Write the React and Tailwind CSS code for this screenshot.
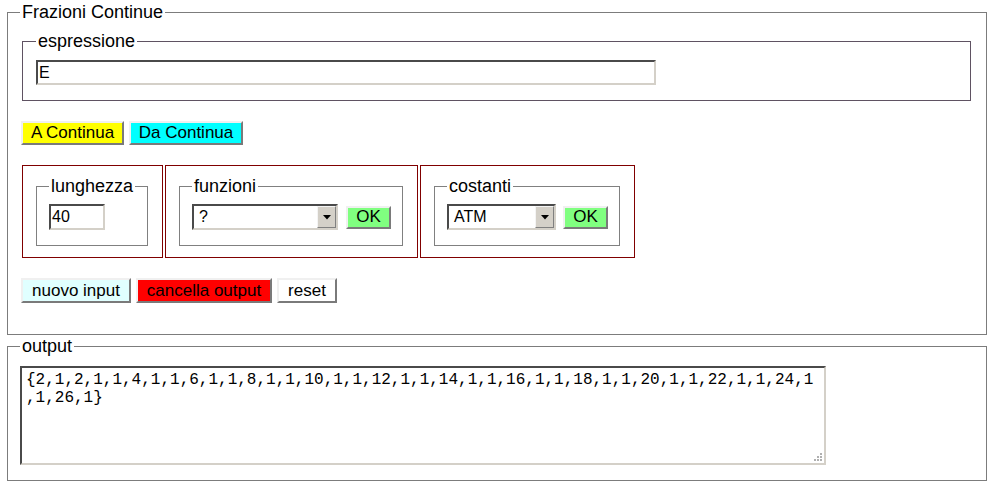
import React from "react";

const outset =
  "border-2 border-t-[#f0f0f0] border-l-[#f0f0f0] border-b-[#7a7a7a] border-r-[#7a7a7a]";
const inset =
  "border-2 border-t-[#4a4a4a] border-l-[#4a4a4a] border-b-[#d4d0c8] border-r-[#d4d0c8]";

function Btn({ className, children }) {
  return (
    <button
      className={`${outset} ${className} flex items-center justify-center text-[17px] leading-[18px] text-black`}
    >
      {children}
    </button>
  );
}

function FakeSelect({ width, value }) {
  return (
    <div
      className={`${inset} ${width} h-[26px] bg-white flex items-center justify-between`}
    >
      <span className="pl-[5px] text-[16px] leading-[18px]">{value}</span>
      <span className="w-[19px] h-[22px] bg-[#d4d0c8] border border-t-[#f4f4f4] border-l-[#f4f4f4] border-b-[#808080] border-r-[#808080] flex items-center justify-center">
        <svg width="8" height="5" viewBox="0 0 8 5">
          <path d="M0 0 H8 L4 4.5 Z" fill="#000" />
        </svg>
      </span>
    </div>
  );
}

export default function App() {
  return (
    <div className="w-[992px] h-[492px] bg-white pt-[3px] pl-[7px] font-['Liberation_Sans',Arial,sans-serif] text-black">
      <fieldset className="w-[980px] border border-[#7c7c7c] pl-[12px] pt-[11px] pb-[31px]">
        <legend className="px-[2px] text-[18px] leading-[18px]">Frazioni Continue</legend>

        <fieldset className="ml-[2px] w-[949px] border border-[#5f5262] pl-[13px] pt-[10px] pb-[15px]">
          <legend className="px-[2px] text-[18px] leading-[18px]">espressione</legend>
          <div className={`${inset} w-[620px] h-[25px] bg-white flex items-center pl-[1px] text-[16px] leading-[18px]`}>
            E
          </div>
        </fieldset>

        <div className="mt-[20px] ml-[1px] flex gap-[5px]">
          <Btn className="bg-[#ffff00] w-[103px] h-[24px]">A Continua</Btn>
          <Btn className="bg-[#00ffff] w-[114px] h-[24px]">Da Continua</Btn>
        </div>

        <div className="mt-[20px] ml-[2px] flex gap-[2px]">
          <div className="w-[141px] border border-[#800000] pl-[13px] pt-[11px] pb-[11px]">
            <fieldset className="w-[112px] border border-[#808080] pl-[12px] pt-[9px] pb-[15px]">
              <legend className="px-[2px] text-[18px] leading-[18px]">lunghezza</legend>
              <div className={`${inset} w-[56px] h-[26px] bg-white flex items-center pl-[1px] text-[16px] leading-[18px]`}>
                40
              </div>
            </fieldset>
          </div>

          <div className="w-[253px] border border-[#800000] pl-[13px] pt-[11px] pb-[11px]">
            <fieldset className="w-[224px] border border-[#808080] pl-[12px] pt-[9px] pb-[15px]">
              <legend className="px-[2px] text-[18px] leading-[18px]">funzioni</legend>
              <div className="flex items-center gap-[8px]">
                <FakeSelect width="w-[146px]" value="?" />
                <Btn className="bg-[#80ff80] h-[23px] w-[45px]">OK</Btn>
              </div>
            </fieldset>
          </div>

          <div className="w-[215px] border border-[#800000] pl-[13px] pt-[11px] pb-[11px]">
            <fieldset className="w-[186px] border border-[#808080] pl-[12px] pt-[9px] pb-[15px]">
              <legend className="px-[2px] text-[18px] leading-[18px]">costanti</legend>
              <div className="flex items-center gap-[7px]">
                <FakeSelect width="w-[109px]" value="ATM" />
                <Btn className="bg-[#80ff80] h-[23px] w-[45px]">OK</Btn>
              </div>
            </fieldset>
          </div>
        </div>

        <div className="mt-[20px] ml-[1px] flex gap-[5px]">
          <Btn className="bg-[#e0ffff] w-[110px] h-[25px]">nuovo input</Btn>
          <Btn className="bg-[#ff0000] w-[136px] h-[25px]">cancella output</Btn>
          <Btn className="bg-white w-[60px] h-[25px]">reset</Btn>
        </div>
      </fieldset>

      <fieldset className="mt-[2px] w-[980px] border border-[#7c7c7c] pl-[12px] pt-[11px] pb-[15px]">
        <legend className="px-[2px] text-[18px] leading-[18px]">output</legend>
        <div
          className={`${inset} border-b-[#c8c8c8] border-r-[#c8c8c8] relative w-[806px] h-[99px] bg-white pl-[4px] pt-[3px] font-['Liberation_Mono','Courier_New',monospace] text-[16px] leading-[18px] text-black`}
        >
          <div className="w-[790px] break-words">
            {"{2,1,2,1,1,4,1,1,6,1,1,8,1,1,10,1,1,12,1,1,14,1,1,16,1,1,18,1,1,20,1,1,22,1,1,24,1,1,26,1}"}
          </div>
          <svg className="absolute right-[1px] bottom-[1px]" width="10" height="10" viewBox="0 0 10 10">
            <rect x="7" y="1" width="2" height="2" fill="#b0b0b0" />
            <rect x="4" y="4" width="2" height="2" fill="#b0b0b0" />
            <rect x="7" y="4" width="2" height="2" fill="#b0b0b0" />
            <rect x="1" y="7" width="2" height="2" fill="#b0b0b0" />
            <rect x="4" y="7" width="2" height="2" fill="#b0b0b0" />
            <rect x="7" y="7" width="2" height="2" fill="#b0b0b0" />
          </svg>
        </div>
      </fieldset>
    </div>
  );
}
